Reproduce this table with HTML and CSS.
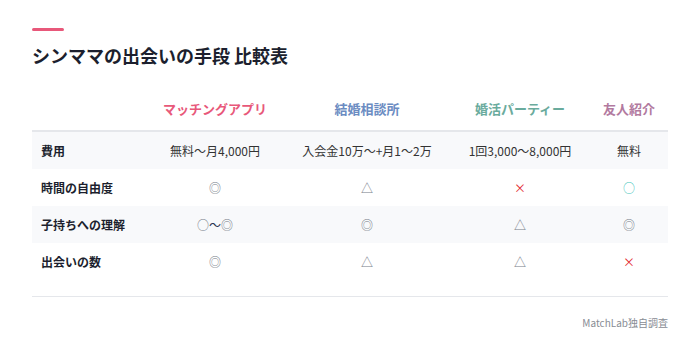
FILE: index.html
```html
<!DOCTYPE html>
<html lang="ja">
<head>
<meta charset="utf-8">
<link rel="stylesheet" href="styles.css">
</head>
<body>
<div class="card">
  <div class="accent"></div>
  <h2 class="title">シンママの出会いの手段 比較表</h2>
  <table class="cmp">
    <colgroup>
      <col class="c1"><col class="c2"><col class="c3"><col class="c4"><col class="c5">
    </colgroup>
    <thead>
      <tr>
        <th></th>
        <th class="h-app">マッチングアプリ</th>
        <th class="h-agency">結婚相談所</th>
        <th class="h-party">婚活パーティー</th>
        <th class="h-friend">友人紹介</th>
      </tr>
    </thead>
    <tbody>
      <tr class="alt">
        <td class="label">費用</td>
        <td>無料〜月4,000円</td>
        <td>入会金10万〜+月1〜2万</td>
        <td>1回3,000〜8,000円</td>
        <td>無料</td>
      </tr>
      <tr>
        <td class="label">時間の自由度</td>
        <td class="sym">◎</td>
        <td class="sym">△</td>
        <td class="sym bad">×</td>
        <td class="sym ok">○</td>
      </tr>
      <tr class="alt">
        <td class="label">子持ちへの理解</td>
        <td class="sym">○<span class="tilde">〜</span>◎</td>
        <td class="sym">◎</td>
        <td class="sym">△</td>
        <td class="sym">◎</td>
      </tr>
      <tr>
        <td class="label">出会いの数</td>
        <td class="sym">◎</td>
        <td class="sym">△</td>
        <td class="sym">△</td>
        <td class="sym bad">×</td>
      </tr>
    </tbody>
  </table>
  <div class="foot">MatchLab独自調査</div>
</div>
</body>
</html>
```

FILE: styles.css
```css
* { box-sizing: border-box; }
html, body { margin: 0; padding: 0; background: #ffffff; }
body {
  font-family: "Noto Sans CJK JP", "Noto Sans", sans-serif;
  color: #333333;
}
.card {
  padding: 28px 32px 0 32px;
}
.accent {
  width: 32px;
  height: 3px;
  background: #e8587a;
  border-radius: 2px;
}
.title {
  margin: 12px 0 0 0;
  font-size: 18px;
  line-height: 25px;
  font-weight: 700;
  color: #1c1f2e;
}
.cmp {
  width: 100%;
  margin-top: 20px;
  border-collapse: collapse;
  table-layout: fixed;
}
.c1 { width: 114px; }
.c2 { width: 138px; }
.c3 { width: 166px; }
.c4 { width: 140px; }
.c5 { width: 78px; }
.cmp th {
  font-size: 13px;
  font-weight: 700;
  line-height: 19px;
  padding: 11px 0 12px;
  text-align: center;
  border-bottom: 2px solid #e5e7eb;
}
.h-app { color: #e8587a; }
.h-agency { color: #6b8cc2; }
.h-party { color: #6aab9d; }
.h-friend { color: #b27a9f; }
.cmp td {
  font-size: 12px;
  line-height: 17px;
  padding: 10px 0;
  text-align: center;
  color: #333333;
}
.cmp td.label {
  text-align: left;
  padding-left: 9px;
  font-weight: 700;
  color: #1c1f2e;
}
.cmp tr.alt td { background: #f8f9fb; }
.cmp td.sym { color: #767c88; }
.cmp td.bad { color: #e3262f; }
.cmp td.ok { color: #3fc5bb; }
.tilde { color: #2a3350; }
.foot {
  margin-top: 16px;
  border-top: 1px solid #e5e7eb;
  padding-top: 19px;
  text-align: right;
  font-size: 10px;
  line-height: 14px;
  color: #888c94;
}
```
